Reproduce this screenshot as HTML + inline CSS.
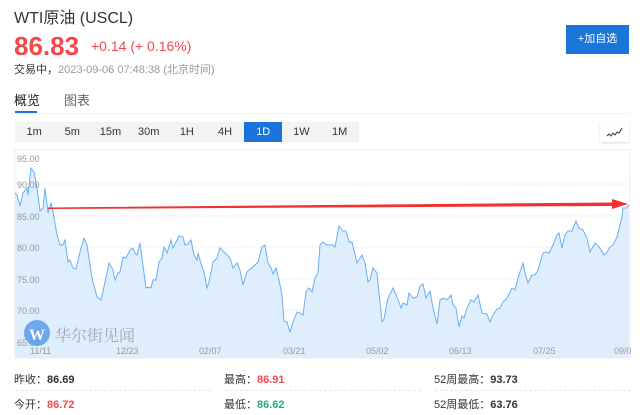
<!DOCTYPE html>
<html><head><meta charset="utf-8"><style>
*{margin:0;padding:0;box-sizing:border-box}
body{width:640px;height:415px;background:#fff;font-family:"Liberation Sans","Noto Sans CJK SC",sans-serif;position:relative;overflow:hidden;color:#333}
.a{position:absolute;white-space:nowrap}
.btns{position:absolute;left:15px;top:122px;height:20px;display:flex;background:#f2f3f5}
.btns div{width:38.2px;text-align:center;font-size:11px;line-height:20px;color:#333}
.btns .on{background:#1a73d9;color:#fff}
.st{font-size:11px;color:#333}
.st b{font-weight:bold}
.dash{position:absolute;top:390px;height:0;border-top:1px dashed #e6e6e6;width:196px}
</style></head><body>
<div class="a" style="left:14px;top:4px;font-size:16px;color:#333">WTI原油 (USCL)</div>
<div class="a" style="left:14px;top:31px;font-size:26px;font-weight:bold;color:#f4484c">86.83</div>
<div class="a" style="left:91px;top:38px;font-size:14px;color:#f4484c">+0.14 (+ 0.16%)</div>
<div class="a" style="left:14px;top:61px;font-size:11px;color:#999"><span style="color:#333">交易中，</span>2023-09-06 07:48:38 (北京时间)</div>
<div class="a" style="left:566px;top:25px;width:63px;height:29px;background:#1a77d9;color:#fff;font-size:11px;line-height:29px;text-align:center">+加自选</div>
<div class="a" style="left:14px;top:90px;font-size:13px;color:#222">概览</div>
<div class="a" style="left:64px;top:90px;font-size:13px;color:#666">图表</div>
<div class="a" style="left:15px;top:111px;width:22px;height:2px;background:#1a73d9"></div>
<div class="a" style="left:15px;top:113px;width:614px;height:1px;background:#f0f0f0"></div>
<div class="btns"><div>1m</div><div>5m</div><div>15m</div><div>30m</div><div>1H</div><div>4H</div><div class="on">1D</div><div>1W</div><div>1M</div></div>
<div class="a" style="left:600px;top:122px;width:29px;height:20px;background:#fff;box-shadow:0 1px 2px rgba(0,0,0,.15)">
<svg width="29" height="20"><polyline points="7,14 9,12 11,14 13,11 15,13 17,10 19,11 22,6" fill="none" stroke="#333" stroke-width="1"/></svg></div>
<svg class="a" style="left:0;top:0" width="640" height="415">
<rect x="15" y="150" width="615" height="208" fill="#fff" stroke="#eee"/>
<g stroke="#f0f0f0"><line x1="15" x2="630" y1="184" y2="184"/><line x1="15" x2="630" y1="216" y2="216"/><line x1="15" x2="630" y1="247" y2="247"/><line x1="15" x2="630" y1="279" y2="279"/><line x1="15" x2="630" y1="310" y2="310"/></g>
<polygon fill="#deeefd" points="15,193 17,195 20,206 23,193 27,188 28,195 31,168 34,172 37,188 40,211 43,208 45,188 48,213 51,203 53,212 57,235 60,245 63,245 65,240 68,262 70,260 73,268 76,269 80,252 84,238 87,245 92,278 97,297 101,300 105,282 109,263 113,270 115,280 118,273 120,272 123,257 126,258 130,250 133,248 135,253 137,255 140,243 146,288 148,287 151,288 153,280 156,280 159,262 162,258 164,247 167,253 171,240 173,248 177,240 179,236 183,237 185,245 188,244 191,240 194,255 197,260 198,253 202,267 204,272 207,288 209,282 213,262 217,258 220,248 225,253 230,258 233,268 237,263 240,270 243,285 247,272 249,270 253,267 258,262 262,247 265,245 268,263 271,268 273,274 276,268 279,280 282,295 284,321 287,322 290,332 293,322 297,312 300,313 303,315 306,292 309,288 312,292 315,278 318,273 320,245 323,242 327,245 333,245 335,247 339,226 343,231 346,231 349,242 352,242 357,263 362,255 365,263 368,282 370,280 373,268 377,273 382,322 384,319 388,298 393,288 397,297 401,308 403,303 407,305 409,293 413,298 417,297 420,286 423,284 426,298 430,291 433,308 437,324 440,300 444,298 447,300 451,295 453,305 456,308 459,327 462,316 464,318 467,308 471,300 474,302 478,295 482,313 487,314 490,322 493,315 497,309 500,308 503,302 507,298 512,288 515,290 518,278 523,263 525,273 528,283 532,275 535,275 538,270 543,253 546,252 549,253 553,245 557,235 559,233 562,248 565,235 568,231 572,231 576,221 579,228 583,230 587,238 590,252 595,243 599,247 604,255 607,252 610,247 613,245 617,237 622,217 623,208 626,208 629,205 629,358 15,358"/>
<polyline fill="none" stroke="#6aaef5" stroke-width="1" points="15,193 17,195 20,206 23,193 27,188 28,195 31,168 34,172 37,188 40,211 43,208 45,188 48,213 51,203 53,212 57,235 60,245 63,245 65,240 68,262 70,260 73,268 76,269 80,252 84,238 87,245 92,278 97,297 101,300 105,282 109,263 113,270 115,280 118,273 120,272 123,257 126,258 130,250 133,248 135,253 137,255 140,243 146,288 148,287 151,288 153,280 156,280 159,262 162,258 164,247 167,253 171,240 173,248 177,240 179,236 183,237 185,245 188,244 191,240 194,255 197,260 198,253 202,267 204,272 207,288 209,282 213,262 217,258 220,248 225,253 230,258 233,268 237,263 240,270 243,285 247,272 249,270 253,267 258,262 262,247 265,245 268,263 271,268 273,274 276,268 279,280 282,295 284,321 287,322 290,332 293,322 297,312 300,313 303,315 306,292 309,288 312,292 315,278 318,273 320,245 323,242 327,245 333,245 335,247 339,226 343,231 346,231 349,242 352,242 357,263 362,255 365,263 368,282 370,280 373,268 377,273 382,322 384,319 388,298 393,288 397,297 401,308 403,303 407,305 409,293 413,298 417,297 420,286 423,284 426,298 430,291 433,308 437,324 440,300 444,298 447,300 451,295 453,305 456,308 459,327 462,316 464,318 467,308 471,300 474,302 478,295 482,313 487,314 490,322 493,315 497,309 500,308 503,302 507,298 512,288 515,290 518,278 523,263 525,273 528,283 532,275 535,275 538,270 543,253 546,252 549,253 553,245 557,235 559,233 562,248 565,235 568,231 572,231 576,221 579,228 583,230 587,238 590,252 595,243 599,247 604,255 607,252 610,247 613,245 617,237 622,217 623,208 626,208 629,205"/>
<polygon fill="#f03232" points="48,207.5 612,202.5 612,199 628,204 612,209 612,206 48,209"/>
<g font-size="9" fill="#999" font-family="Liberation Sans,sans-serif">
<text x="17" y="162">95.00</text><text x="17" y="188">90.00</text><text x="17" y="220">85.00</text><text x="17" y="251">80.00</text><text x="17" y="283">75.00</text><text x="17" y="314">70.00</text><text x="17" y="346">65.00</text>
<text x="30" y="354">11/11</text><text x="116" y="354">12/23</text><text x="199" y="354">02/07</text><text x="283" y="354">03/21</text><text x="366" y="354">05/02</text><text x="449" y="354">06/13</text><text x="533" y="354">07/25</text><text x="614" y="354">09/0</text></g>
<circle cx="37" cy="333" r="13" fill="#5b9be6" opacity=".85"/>
<text x="29" y="340" font-size="16" font-weight="bold" fill="#fff" font-family="Liberation Serif,serif">W</text>
<text x="55" y="341" font-size="16" fill="#9aa0a8" font-family="Noto Serif CJK SC,serif" opacity=".9">华尔街见闻</text>
</svg>
<div class="a st" style="left:14px;top:371px">昨收：<b>86.69</b></div>
<div class="a st" style="left:224px;top:371px">最高：<b style="color:#f4484c">86.91</b></div>
<div class="a st" style="left:434px;top:371px">52周最高：<b>93.73</b></div>
<div class="a st" style="left:14px;top:396px">今开：<b style="color:#f4484c">86.72</b></div>
<div class="a st" style="left:224px;top:396px">最低：<b style="color:#1fb37a">86.62</b></div>
<div class="a st" style="left:434px;top:396px">52周最低：<b>63.76</b></div>
<div class="dash" style="left:15px"></div><div class="dash" style="left:225px"></div><div class="dash" style="left:435px"></div>
</body></html>
